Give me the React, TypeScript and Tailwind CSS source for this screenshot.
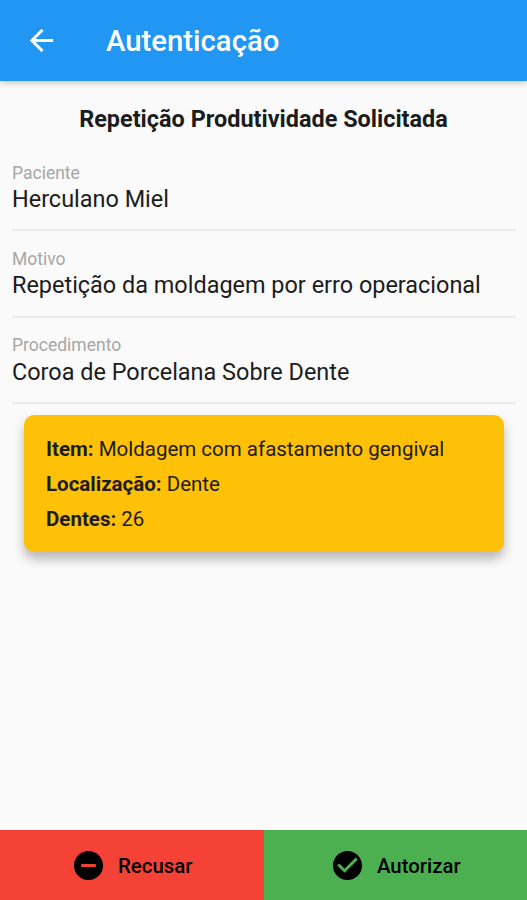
import { ReactNode } from 'react';
import { MdArrowBack, MdCheckCircle, MdRemoveCircle } from 'react-icons/md';

const FIELDS = [
  { label: 'Paciente', value: 'Herculano Miel' },
  { label: 'Motivo', value: 'Repetição da moldagem por erro operacional' },
  { label: 'Procedimento', value: 'Coroa de Porcelana Sobre Dente' }
];

const DETAILS = [
  { label: 'Item:', value: 'Moldagem com afastamento gengival' },
  { label: 'Localização:', value: 'Dente' },
  { label: 'Dentes:', value: '26' }
];

function Field({ label, value }: { label: string; value: string }) {
  return (
    <div className="h-[86.4px] border-b-2 border-[#ebebeb] pt-[17.5px]">
      <p className="text-[17.5px] leading-[21px] text-[#a6a6a6]">{label}</p>
      <p className="mt-[1.5px] whitespace-nowrap text-[23.45px] leading-[28px]">{value}</p>
    </div>
  );
}

function ActionButton({ className, icon, label }: { className: string; icon: ReactNode; label: string }) {
  return (
    <button className={`flex h-full items-center justify-center text-[20.4px] font-medium ${className}`}>
      {icon}
      <span className="ml-3 pt-[3px]">{label}</span>
    </button>
  );
}

export default function App() {
  return (
    <div className="flex h-[900px] w-[527px] flex-col overflow-hidden bg-[#fafafa] font-[Roboto,sans-serif] text-[#1c1c1c]">
      <header className="z-10 flex h-[81px] shrink-0 items-center bg-[#2196f3] pl-[24px] text-white shadow-[0_2px_6px_rgba(0,0,0,0.2)]">
        <button aria-label="Voltar">
          <MdArrowBack className="h-[35px] w-[35px]" />
        </button>
        <h1 className="ml-[47px] pt-[3px] text-[29.3px] font-medium">Autenticação</h1>
      </header>

      <main className="flex-1 pr-[11px] pl-3">
        <h2 className="pt-6 pr-px text-center text-[23.45px] leading-[28px] font-bold">Repetição Produtividade Solicitada</h2>

        <div className="pt-3">
          {FIELDS.map(field => (
            <Field key={field.label} label={field.label} value={field.value} />
          ))}
        </div>

        <div className="mx-3 mt-[11px] h-[137px] rounded-[10px] bg-[#ffc107] px-[22px] pt-[17px] text-[20.5px] leading-[35px] shadow-[0_7px_11px_rgba(0,0,0,0.27)]">
          {DETAILS.map(detail => (
            <p key={detail.label}>
              <b>{detail.label}</b> {detail.value}
            </p>
          ))}
        </div>
      </main>

      <footer className="grid h-[70px] shrink-0 grid-cols-2 text-black">
        <ActionButton className="bg-[#f44336]" icon={<MdRemoveCircle className="h-[35px] w-[35px]" />} label="Recusar" />
        <ActionButton className="bg-[#4caf50]" icon={<MdCheckCircle className="h-[35px] w-[35px]" />} label="Autorizar" />
      </footer>
    </div>
  );
}
